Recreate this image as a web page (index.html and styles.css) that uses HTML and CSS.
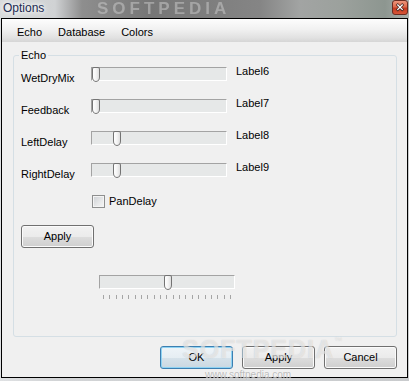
FILE: index.html
```html
<!DOCTYPE html>
<html>
<head>
<meta charset="utf-8">
<title>Options</title>
<link rel="stylesheet" href="styles.css">
</head>
<body>
<div class="frame">
  <div class="titlebar">
    <span class="title">Options</span>
    <span class="wm-title">SOFTPEDIA</span>
    <svg class="close" width="16" height="15" viewBox="0 0 16 15">
      <defs>
        <linearGradient id="cg" x1="0" y1="0" x2="0" y2="1">
          <stop offset="0" stop-color="#ee9a80"/>
          <stop offset="0.45" stop-color="#dd6a4c"/>
          <stop offset="0.55" stop-color="#c33a20"/>
          <stop offset="1" stop-color="#d9583a"/>
        </linearGradient>
      </defs>
      <rect x="0.5" y="0.5" width="15" height="14" rx="2.5" fill="url(#cg)" stroke="#6b2d22"/>
      <path d="M5.8 5L10.2 9.4M10.2 5L5.8 9.4" stroke="#4a2a24" stroke-width="2.8" stroke-linecap="square"/>
      <path d="M5.8 5L10.2 9.4M10.2 5L5.8 9.4" stroke="#ffffff" stroke-width="1.3" stroke-linecap="square"/>
    </svg>
  </div>
  <div class="window">
    <nav class="menubar">
      <span class="menu">Echo</span>
      <span class="menu">Database</span>
      <span class="menu">Colors</span>
    </nav>
    <div class="client">
      <fieldset class="group">
        <legend>Echo</legend>
        <div class="sliders">
          <div class="row">
            <span class="lbl">WetDryMix</span>
            <div class="track"><span class="thumb" style="left:0px"></span></div>
            <span class="val">Label6</span>
          </div>
          <div class="row">
            <span class="lbl">Feedback</span>
            <div class="track"><span class="thumb" style="left:0px"></span></div>
            <span class="val">Label7</span>
          </div>
          <div class="row">
            <span class="lbl">LeftDelay</span>
            <div class="track"><span class="thumb" style="left:21px"></span></div>
            <span class="val">Label8</span>
          </div>
          <div class="row">
            <span class="lbl">RightDelay</span>
            <div class="track"><span class="thumb" style="left:21px"></span></div>
            <span class="val">Label9</span>
          </div>
        </div>
        <label class="check"><span class="box"></span>PanDelay</label>
        <button class="btn small">Apply</button>
        <div class="slider2">
          <div class="track"><span class="thumb" style="left:64px"></span></div>
          <div class="ticks">
            <i></i><i></i><i></i><i></i><i></i><i></i><i></i><i></i><i></i><i></i><i></i><i></i><i></i><i></i><i></i><i></i><i></i><i></i><i></i><i></i><i></i>
          </div>
        </div>
      </fieldset>
      <div class="buttons">
        <button class="btn default">OK</button>
        <button class="btn">Apply</button>
        <button class="btn">Cancel</button>
      </div>
    </div>
  </div>
  <div class="wm-big">SOFTPEDIA<span class="tm">™</span></div>
  <div class="wm-url">www.softpedia.com</div>
</div>
</body>
</html>
```

FILE: styles.css
```css
html, body {
  margin: 0;
  padding: 0;
}
body {
  width: 409px;
  height: 381px;
  overflow: hidden;
  background: #d9dcdf;
  font-family: "Liberation Sans", Arial, sans-serif;
  font-size: 11px;
  line-height: 13px;
  color: #000;
}
.frame {
  position: relative;
  width: 409px;
  height: 381px;
  background: linear-gradient(90deg, #dfe1e3 0px, #d2d4d6 55px, #c9cbcd 409px);
}
.titlebar {
  position: relative;
  height: 18px;
  display: flex;
  align-items: flex-start;
  padding: 0 1px 0 3px;
  overflow: hidden;
  background: linear-gradient(90deg, #d9dbdc 0px, #d0d2d4 55px, #8e8e8e 82px, #767676 150px, #858585 260px, #a2a4a3 300px, #9ca19d 340px, #8d9690 385px, #aab0ac 409px);
}
.title {
  position: relative;
  z-index: 2;
  margin-top: 1px;
  font-size: 12px;
  line-height: 15px;
  color: #1d2b52;
  text-shadow: 0 0 4px #fff, 0 0 6px #fff;
}
.wm-title {
  position: absolute;
  left: 97px;
  top: 0;
  font-size: 17px;
  line-height: 18px;
  font-weight: bold;
  letter-spacing: 4px;
  color: rgba(205, 205, 205, 0.5);
  filter: blur(0.7px);
}
.close {
  display: block;
  flex: none;
  margin-left: auto;
  position: relative;
  z-index: 3;
}
.window {
  margin-left: 1px;
  width: 407px;
  height: 360px;
  box-sizing: border-box;
  border: 1px solid #000;
  background: #f0f0f0;
  display: flex;
  flex-direction: column;
}
.menubar {
  height: 23px;
  flex: none;
  box-sizing: border-box;
  display: flex;
  padding: 3px 0 0 7px;
  background: linear-gradient(#fdfdfd 0%, #f1f1f1 45%, #e2e2e2 80%, #d6d6d6 100%);
}
.menu {
  padding: 0 8px;
  line-height: 20px;
}
.client {
  flex: 1;
  display: flex;
  flex-direction: column;
}
.group {
  margin: 6px 0 0 11px;
  padding: 0 0 0 7px;
  width: 384px;
  height: 289px;
  box-sizing: border-box;
  border: 1px solid #d5dfe5;
  border-radius: 3px;
  min-width: 0;
  display: flex;
  flex-direction: column;
  align-items: flex-start;
}
.group legend {
  padding: 0 2px;
  margin-left: -2px;
  line-height: 14px;
  font-size: 11px;
}
.sliders {
  margin-top: 3px;
  display: flex;
  flex-direction: column;
}
.row {
  display: grid;
  grid-template-columns: 70px 136px auto;
  height: 32px;
  align-items: start;
}
.lbl {
  margin-top: 7px;
}
.val {
  margin-left: 9px;
}
.track {
  position: relative;
  width: 136px;
  height: 14px;
  box-sizing: border-box;
  border: 1px solid;
  border-color: #a3a3a3 #ffffff #ffffff #a3a3a3;
  background: #e6e8e8;
}
.row .track {
  margin-top: 2px;
}
.thumb {
  position: absolute;
  top: -1px;
  width: 8px;
  height: 15px;
  box-sizing: border-box;
  border: 1px solid #737373;
  border-radius: 2px 2px 4px 4px / 2px 2px 5px 5px;
  background: linear-gradient(90deg, #ffffff 0%, #f4f4f4 50%, #dedede 100%);
}
.check {
  margin: 2px 0 0 71px;
  display: flex;
  align-items: center;
  gap: 4px;
}
.box {
  width: 13px;
  height: 13px;
  box-sizing: border-box;
  border: 1px solid #8e8f8f;
  background: linear-gradient(135deg, #cdd0d4 0%, #e8e9ea 60%, #f6f6f6 100%);
  box-shadow: inset 0 0 0 1px #f4f4f4;
}
.btn {
  width: 73px;
  height: 23px;
  box-sizing: border-box;
  margin: 0;
  padding: 0;
  font-family: "Liberation Sans", Arial, sans-serif;
  font-size: 11px;
  line-height: 13px;
  color: #000;
  border: 1px solid #707070;
  border-radius: 3px;
  background: linear-gradient(#f2f2f2 0%, #ebebeb 50%, #dddddd 51%, #cfcfcf 100%);
  box-shadow: inset 0 0 0 1px #fbfbfb;
}
.btn.small {
  margin-top: 17px;
}
.btn.default {
  border-color: #3c7fb1;
  box-shadow: inset 0 0 0 1px #8fd3f3;
  background: linear-gradient(#eef4f8 0%, #e6eef3 50%, #d6e2ea 51%, #cbd8e1 100%);
}
.slider2 {
  margin: 27px 0 0 78px;
}
.ticks {
  margin-top: 6px;
  width: 136px;
  height: 4px;
  box-sizing: border-box;
  padding: 0 4px;
  display: flex;
  justify-content: space-between;
}
.ticks i {
  display: block;
  width: 1px;
  height: 4px;
  background: #a5a5a5;
}
.buttons {
  margin-top: 9px;
  padding-right: 10px;
  display: flex;
  justify-content: flex-end;
  gap: 9px;
}
.wm-big {
  position: absolute;
  left: 182px;
  top: 336px;
  font-size: 25px;
  line-height: 26px;
  font-weight: bold;
  letter-spacing: 1px;
  color: rgba(255, 255, 255, 0.5);
  text-shadow: 0 0 1px rgba(150, 150, 150, 0.45);
  pointer-events: none;
}
.wm-big .tm {
  font-size: 8px;
  vertical-align: top;
  line-height: 10px;
  font-weight: normal;
}
.wm-url {
  position: absolute;
  left: 205px;
  top: 369px;
  font-size: 10px;
  line-height: 11px;
  color: rgba(160, 160, 160, 0.7);
  text-shadow: 0 0 1px #fff;
  pointer-events: none;
}
```
